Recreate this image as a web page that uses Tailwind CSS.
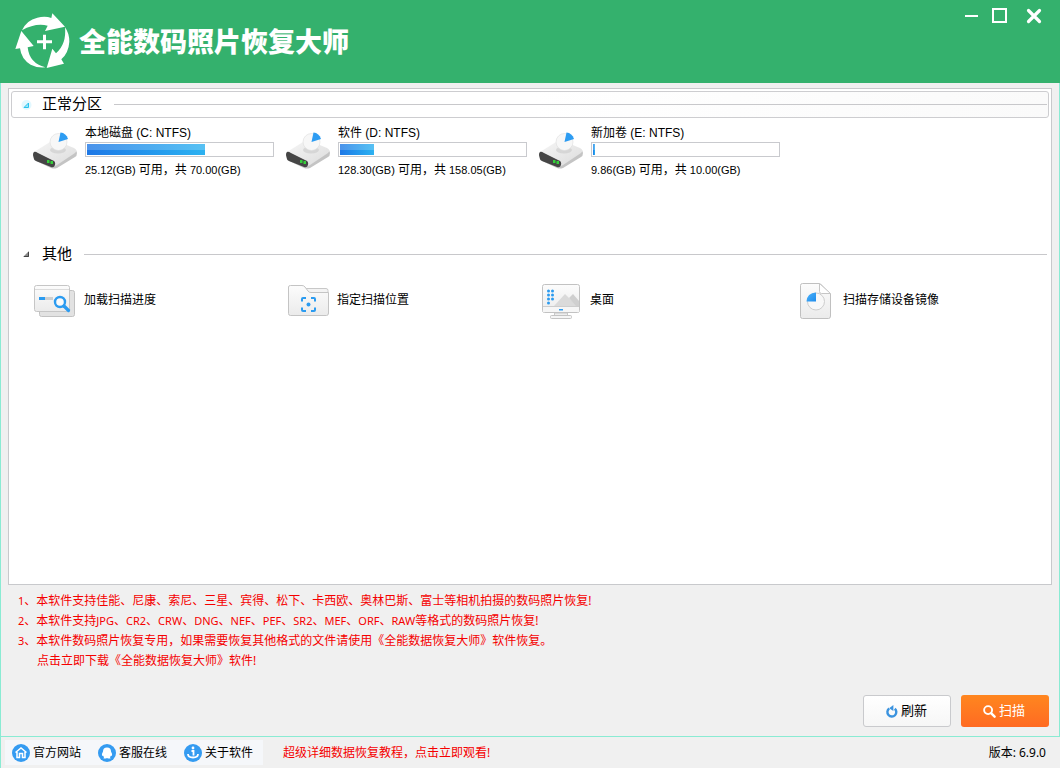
<!DOCTYPE html>
<html lang="zh-CN">
<head>
<meta charset="utf-8">
<meta name="viewport" content="width=device-width, initial-scale=1">
<title>全能数码照片恢复大师</title>
<script src="https://cdn.jsdelivr.net/npm/@tailwindcss/browser@4"></script>
</head>
<body class="flex min-h-screen flex-col bg-[#f0f0f0] font-['Noto_Sans','Noto_Sans_CJK_SC',sans-serif] text-xs text-black">

<svg class="absolute size-0" aria-hidden="true">
  <defs>
    <linearGradient id="face" x1="0" y1="0" x2="0" y2="1"><stop offset="0" stop-color="#fcfcfc"/><stop offset="1" stop-color="#ebebeb"/></linearGradient>
    <linearGradient id="metal" x1="0" y1="0" x2="1" y2="1"><stop offset="0" stop-color="#f6f6f6"/><stop offset="1" stop-color="#dcdcdc"/></linearGradient>
    <linearGradient id="blue" x1="0" y1="0" x2="1" y2="1"><stop offset="0" stop-color="#4db3fb"/><stop offset="1" stop-color="#1f8ceb"/></linearGradient>
  </defs>
  <symbol id="disk" viewBox="0 0 44 38">
    <path d="M1 20 Q0 21 0 23 L1 27 Q1 28 3 29 L18 36 Q21 37 24 36 L42 25 Q44 24 44 21 L43 18 Z" fill="#c4c4c4"/>
    <path d="M1 20 L17 10 Q20 8 24 9 L41 16 Q45 18 42 21 L24 33 Q21 35 18 33 L3 24 Q0 22 1 20Z" fill="url(#metal)"/>
    <path d="M1 20 Q0 21 0 23 L1 27 Q1 28 3 29 L18 35 Q21 36 22 33 Q23 29 19 28 L5 21 Q2 19 1 20Z" fill="#454545"/>
    <path d="M14 28h2.500v3h-2.500z M17.500 29h2.500v3h-2.500z" fill="#35cf3a"/>
    <ellipse cx="25" cy="18" rx="8" ry="3.500" fill="#c9c9c9" opacity=".6"/>
    <circle cx="25.500" cy="10" r="8.500" fill="#f7f7f7" stroke="#dedede" stroke-width=".6"/>
    <path d="M25.500 10 L27.500 .5 Q33 1 35 7Z" fill="#2d9cf2"/>
  </symbol>
</svg>

<header class="flex h-[83px] shrink-0 items-start justify-between bg-[#34b16d] text-white">
  <div class="flex items-center gap-[9px] pt-[13px] pl-[15px]">
    <svg class="size-[55px]" viewBox="45 39 165 165" fill="#fff" aria-hidden="true">
      <path d="M66 91 Q80 60 112 53 Q136 47 154 54 L157 40 L195 80 L135 93 L143 77 Q106 68 66 91Z"/>
      <path d="M195 82 Q208 100 208 125 Q206 158 184 178 L192 191 L140 204 L157 146 L168 160 Q200 132 195 82Z"/>
      <path d="M64 93 L46 147 L60 145 Q64 178 92 194 Q110 204 136 202 Q88 190 83 142 L101 138Z"/>
      <path d="M129 104h9v17h18v9h-18v18h-9v-18h-18v-9h18z"/>
    </svg>
    <h1 class="text-[27px] leading-9 font-black font-['Noto_Sans_CJK_SC',sans-serif]">全能数码照片恢复大师</h1>
  </div>
  <div class="flex gap-3.5 pt-2 pr-[18px]">
    <button type="button" aria-label="最小化" class="size-4"><svg class="size-4" viewBox="0 0 16 16"><path d="M3 7h13v2H3z" fill="#fff"/></svg></button>
    <button type="button" aria-label="最大化" class="size-4"><svg class="size-4" viewBox="0 0 16 16"><path d="M1 1h13v13H1z" fill="none" stroke="#fff" stroke-width="2"/></svg></button>
    <button type="button" aria-label="关闭" class="ml-1 size-4"><svg class="size-4" viewBox="0 0 16 16"><path d="M2.500 2.500l11 11M13.500 2.500l-11 11" fill="none" stroke="#fff" stroke-width="3.200" stroke-linecap="round"/></svg></button>
  </div>
</header>

<main class="flex flex-1 flex-col border-x border-b border-[#8aebd3] px-[7px] pt-[5px] pb-[9px]">
  <div class="flex-1 border border-[#c8c9cc] bg-white p-0.5">
    <section>
      <div class="flex h-[27px] items-center rounded-[3px] border border-[#cdcdd0] bg-gradient-to-r from-white via-white to-[#fafafa] pr-px pl-[9px]">
        <svg class="size-3" viewBox="0 0 12 12" aria-hidden="true"><circle cx="5.500" cy="6" r="5" fill="#e2f8ff"/><path d="M3 8.500L7.500 4V8.500Z" fill="#9be6fb" stroke="#28c3ee"/></svg>
        <h2 class="ml-[9px] pb-[3px] text-[15px] leading-5">正常分区</h2>
        <div class="ml-3 h-px flex-1 bg-[#c8c8cb]"></div>
      </div>
      <ul class="flex h-[124px] flex-wrap pt-[7px] pl-[22px]">
        <li class="flex w-[253px]">
          <svg class="mt-[7px] mr-2 h-[38px] w-11" aria-hidden="true"><use href="#disk"/></svg>
          <div class="font-['Liberation_Sans','Noto_Sans_CJK_SC',sans-serif]">
            <h3 class="leading-4">本地磁盘 (C: NTFS)</h3>
            <div class="mt-px mb-[5px] h-[15px] w-[189px] border border-[#c9cace] p-px" role="progressbar" aria-label="C 盘已用空间" aria-valuenow="64">
              <div class="h-full bg-gradient-to-r from-[#1f78e6] to-[#2db2f1]" style="width:64%"><div class="h-1/2 bg-white/20"></div></div>
            </div>
            <p class="leading-4"><span class="text-[11px]">25.12(GB) </span>可用，共<span class="text-[11px]"> 70.00(GB)</span></p>
          </div>
        </li>
        <li class="flex w-[253px]">
          <svg class="mt-[7px] mr-2 h-[38px] w-11" aria-hidden="true"><use href="#disk"/></svg>
          <div class="font-['Liberation_Sans','Noto_Sans_CJK_SC',sans-serif]">
            <h3 class="leading-4">软件 (D: NTFS)</h3>
            <div class="mt-px mb-[5px] h-[15px] w-[189px] border border-[#c9cace] p-px" role="progressbar" aria-label="D 盘已用空间" aria-valuenow="19">
              <div class="h-full bg-gradient-to-r from-[#1f78e6] to-[#2db2f1]" style="width:18.5%"><div class="h-1/2 bg-white/20"></div></div>
            </div>
            <p class="leading-4"><span class="text-[11px]">128.30(GB) </span>可用，共<span class="text-[11px]"> 158.05(GB)</span></p>
          </div>
        </li>
        <li class="flex w-[253px]">
          <svg class="mt-[7px] mr-2 h-[38px] w-11" aria-hidden="true"><use href="#disk"/></svg>
          <div class="font-['Liberation_Sans','Noto_Sans_CJK_SC',sans-serif]">
            <h3 class="leading-4">新加卷 (E: NTFS)</h3>
            <div class="mt-px mb-[5px] h-[15px] w-[189px] border border-[#c9cace] p-px" role="progressbar" aria-label="E 盘已用空间" aria-valuenow="1">
              <div class="h-full bg-gradient-to-r from-[#1f78e6] to-[#2db2f1]" style="width:1.1%"><div class="h-1/2 bg-white/20"></div></div>
            </div>
            <p class="leading-4"><span class="text-[11px]">9.86(GB) </span>可用，共<span class="text-[11px]"> 10.00(GB)</span></p>
          </div>
        </li>
      </ul>
    </section>

    <section>
      <div class="flex h-6 items-center pr-0.5 pl-2.5">
        <svg class="size-3" viewBox="0 0 12 12" aria-hidden="true"><path d="M2 9L8 3V9Z" fill="#8a8a8a"/><path d="M3 8.500h4.500V4" fill="none" stroke="#444"/></svg>
        <h2 class="ml-[9px] pb-[3px] text-[15px] leading-5">其他</h2>
        <div class="ml-3 h-px flex-1 bg-[#c8c8cb]"></div>
      </div>
      <ul class="flex flex-wrap pt-[17px] pl-[22px] leading-[34px]">
        <li class="w-[253px]">
          <button type="button" class="flex items-start gap-[7px]">
            <svg class="h-9 w-11" viewBox="0 0 44 36" aria-hidden="true">
              <rect x="6.500" y="7.500" width="35" height="26" rx="2" fill="#e2e2e2" stroke="#c2c2c2"/>
              <rect x="1.500" y="2.500" width="35" height="26" rx="2" fill="url(#face)" stroke="#c6c6c6"/>
              <path d="M2 6.500h34" stroke="#dcdcdc"/>
              <path d="M6 17h6v-3H6z" fill="#2b9bf0"/><path d="M12 14h8v3h-8z" fill="#cfcfcf"/>
              <circle cx="27" cy="19" r="5" fill="#fafafa" stroke="#2b9bf0" stroke-width="2.400"/><path d="M31 23l4.500 4.500" stroke="#2b9bf0" stroke-width="3.200" stroke-linecap="round"/>
            </svg>加载扫描进度
          </button>
        </li>
        <li class="w-[253px]">
          <button type="button" class="flex items-start gap-[7px]">
            <svg class="h-9 w-11" viewBox="0 0 44 36" aria-hidden="true">
              <path d="M18 5.500h22q2 0 2 2V31h-20z" fill="#f3f3f3" stroke="#c8c8c8"/>
              <path d="M2.500 4q0-1.500 2-1.500H16q2 0 3 1.500l3 4q1 1.500 3 1.500h17.500V30q0 2.500-2 2.500h-36q-2 0-2-2Z" fill="url(#face)" stroke="#c4c4c4"/>
              <path d="M16 18.500v-2.500q0-1 1-1h3M25 15h3q1 0 1 1v2.500M29 24.500v2.500q0 1-1 1h-3M20 28h-3q-1 0-1-1v-2.500" fill="none" stroke="#2b9bf0" stroke-width="2"/>
              <circle cx="22.500" cy="21.500" r="2" fill="#2b9bf0"/>
            </svg>指定扫描位置
          </button>
        </li>
        <li class="w-[253px]">
          <button type="button" class="flex items-start gap-[7px]">
            <svg class="h-9 w-11" viewBox="0 0 44 36" aria-hidden="true">
              <path d="M15.500 30h13v3h-13z" fill="#eee" stroke="#c8c8c8"/><rect x="11.500" y="32.500" width="21" height="3" rx="1" fill="#f5f5f5" stroke="#c4c4c4"/>
              <rect x="3.500" y="1.500" width="37" height="28" rx="2" fill="url(#face)" stroke="#c2c2c2"/>
              <path d="M15 23L26 11L38 23Z" fill="#dadada"/><path d="M30 15L34 11L40 18V23H37Z" fill="#cfcfcf"/>
              <path d="M4 23.500h36" stroke="#cdcdcd"/><path d="M4 24h36v5H4z" fill="#f6f6f6"/><path d="M20 26h4v1.500h-4z" fill="#2b9bf0"/>
              <g fill="#2b9bf0"><circle cx="9.500" cy="8" r="1.500"/><circle cx="13.500" cy="8" r="1.500"/><circle cx="9.500" cy="12" r="1.500"/><circle cx="13.500" cy="12" r="1.500"/><circle cx="9.500" cy="16" r="1.500"/><circle cx="13.500" cy="16" r="1.500"/><circle cx="9.500" cy="20" r="1.500"/></g>
            </svg>桌面
          </button>
        </li>
        <li class="w-[253px]">
          <button type="button" class="flex items-start gap-[7px]">
            <svg class="h-9 w-11" viewBox="0 0 44 36" aria-hidden="true">
              <path d="M8.500 2.500q0-2 2-2H28L38.500 11V33q0 2.500-2 2.500h-26q-2 0-2-2Z" fill="url(#face)" stroke="#c0c0c0"/>
              <path d="M27.500 .5V8.500q0 2 2 2H38.500Z" fill="#fff" stroke="#c6c6c6"/>
              <circle cx="24" cy="18.500" r="8.500" fill="#f8f8f8" stroke="#cdcdcd"/>
              <path d="M24 18.500H14.500Q15 10 24 9.500Z" fill="url(#blue)"/>
            </svg>扫描存储设备镜像
          </button>
        </li>
      </ul>
    </section>
  </div>

  <div class="pt-1.5 pl-2.5 leading-5 text-[#f50000]">
    <p><span class="text-[11px]">1</span>、本软件支持佳能、尼康、索尼、三星、宾得、松下、卡西欧、奥林巴斯、富士等相机拍摄的数码照片恢复!</p>
    <p><span class="text-[11px]">2</span>、本软件支持<span class="text-[11px]">JPG</span>、<span class="text-[11px]">CR2</span>、<span class="text-[11px]">CRW</span>、<span class="text-[11px]">DNG</span>、<span class="text-[11px]">NEF</span>、<span class="text-[11px]">PEF</span>、<span class="text-[11px]">SR2</span>、<span class="text-[11px]">MEF</span>、<span class="text-[11px]">ORF</span>、<span class="text-[11px]">RAW</span>等格式的数码照片恢复!</p>
    <p><span class="text-[11px]">3</span>、本软件数码照片恢复专用，如果需要恢复其他格式的文件请使用《全能数据恢复大师》软件恢复。</p>
    <p class="pl-[19px]"><a href="#">点击立即下载《全能数据恢复大师》软件!</a></p>
  </div>

  <div class="mt-6 flex justify-end gap-2.5 pr-[3px] text-[13px]">
    <button type="button" class="flex h-8 w-[88px] items-center justify-center gap-[3px] rounded-[3px] border border-[#c9cacd] bg-gradient-to-b from-white to-[#f6f6f6] pr-0.5">
      <svg class="size-[13px]" viewBox="0 0 14 14" aria-hidden="true"><path d="M10.500 4A4.800 4.800 0 1 1 4.500 3.800" fill="none" stroke="#3b93df" stroke-width="2.600"/><path d="M4.500 3.500L9 0V6.500Z" fill="#3b93df"/></svg>刷新
    </button>
    <button type="button" class="flex h-8 w-[88px] items-center justify-center gap-[3px] rounded-[3px] bg-gradient-to-b from-[#ff861f] to-[#ff6a22] pr-0.5 text-white">
      <svg class="size-[13px]" viewBox="0 0 14 14" fill="none" stroke="#fff" aria-hidden="true"><circle cx="5.500" cy="5.500" r="4.300" stroke-width="2"/><path d="M9 9l3.500 3.500" stroke-width="2.600" stroke-linecap="round"/></svg>扫描
    </button>
  </div>
</main>

<footer class="flex h-[31px] shrink-0 items-center justify-between border-l border-[#8aebd3] pr-3.5 pl-1">
  <div class="flex items-center gap-5">
    <nav class="flex h-[25px] items-center gap-[17px] bg-[#f5f7fa] pr-2.5 pl-[7px]">
      <a href="#" class="flex items-center gap-[3px]">
        <svg class="size-[18px]" viewBox="0 0 18 18" aria-hidden="true"><circle cx="9" cy="9" r="9" fill="#349bf1"/><path d="M3.500 8.500L9 4L14.500 8.500M5 8V13.500H7.500V9.500H10.500V13.500H13V8" fill="none" stroke="#fff" stroke-width="1.500"/></svg>官方网站
      </a>
      <a href="#" class="flex items-center gap-[3px]">
        <svg class="size-[18px]" viewBox="0 0 18 18" aria-hidden="true"><circle cx="9" cy="9" r="9" fill="#349bf1"/><path d="M9 3.500Q13 3.500 13 7.500Q14.500 10 14 12L13 11.500Q12.500 12.500 12 13L12.500 14.500H10L9 14L8 14.500H5.500L6 13Q5.500 12.500 5 11.500L4 12Q3.500 10 5 7.500Q5 3.500 9 3.500Z" fill="#fff"/></svg>客服在线
      </a>
      <a href="#" class="flex items-center gap-[3px]">
        <svg class="size-[18px]" viewBox="0 0 18 18" aria-hidden="true"><circle cx="9" cy="9" r="9" fill="#349bf1"/><circle cx="9" cy="4" r="1.400" fill="#fff"/><path d="M7.500 7H9.500V11.500M4 10Q4 13.500 9 13.500T14 10" fill="none" stroke="#fff" stroke-width="1.800"/></svg>关于软件
      </a>
    </nav>
    <a href="#" class="text-[#f50000]">超级详细数据恢复教程，点击立即观看!</a>
  </div>
  <p>版本: 6.9.0</p>
</footer>
</body>
</html>
